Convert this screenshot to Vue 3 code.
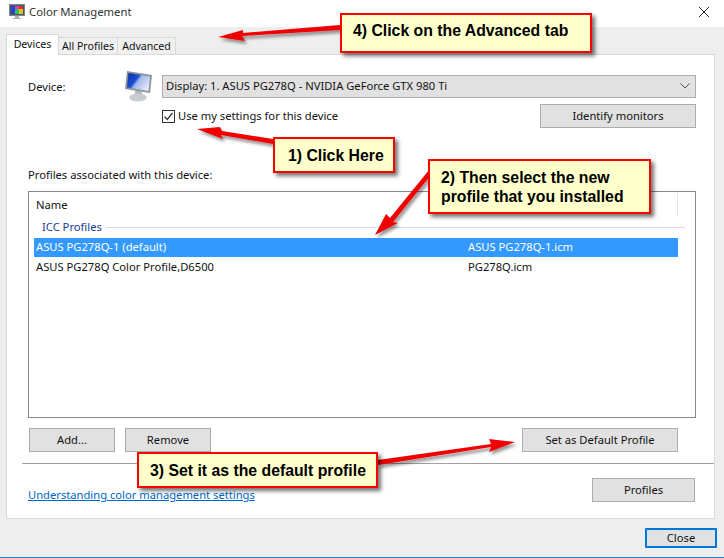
<script setup>
const profiles = [
  { name: 'ASUS PG278Q-1 (default)', file: 'ASUS PG278Q-1.icm', selected: true },
  { name: 'ASUS PG278Q Color Profile,D6500', file: 'PG278Q.icm', selected: false },
]
const arrows = [
  '340,25 243,33 243,30 218,37 245,41 242,36 340,30',
  '197,129 220,127 222,131 273,139 273,144 221,135 223,139',
  '375,235 386,214 390,218 429,170 431,175 393,222 398,223',
  '515,442 489,439 491,444 378,460 378,465 491,447 489,452',
]
</script>

<template>
  <div class="window">
    <header class="titlebar">
      <svg class="app-icon" viewBox="0 0 16 16" width="16" height="16">
        <rect x="0.5" y="0.5" width="15" height="11" fill="#4a5560" stroke="#7d8890" />
        <rect x="2" y="2" width="4" height="8" fill="#2b3fd0" />
        <rect x="6" y="2" width="4" height="8" fill="#30c050" />
        <rect x="10" y="2" width="4" height="8" fill="#e8c020" />
        <rect x="6" y="2" width="4" height="3" fill="#d040c0" />
        <rect x="10" y="2" width="4" height="3" fill="#e03030" />
        <path d="M6 12h4v2h2v1H4v-1h2z" fill="#a8aeb2" />
      </svg>
      <span class="title">Color Management</span>
      <svg class="close-x" viewBox="0 0 10 10" width="10" height="10">
        <path d="M0 0L10 10M10 0L0 10" stroke="#222" stroke-width="1" fill="none" />
      </svg>
    </header>

    <main class="body">
      <nav class="tabs">
        <div class="tab active">Devices</div>
        <div class="tab tab-profiles">All Profiles</div>
        <div class="tab tab-advanced">Advanced</div>
      </nav>

      <section class="panel">
        <div class="device-row">
          <span class="device-label">Device:</span>
          <svg class="monitor" viewBox="0 0 28 32" width="28" height="32">
            <defs>
              <linearGradient id="screen" x1="0" y1="0" x2="1" y2="0.6">
                <stop offset="0" stop-color="#0a2fa8" />
                <stop offset="0.45" stop-color="#1b4fd0" />
                <stop offset="0.55" stop-color="#9fb4ec" />
                <stop offset="1" stop-color="#dfe6f8" />
              </linearGradient>
            </defs>
            <path d="M2 0L27 4L25 22L0 18Z" fill="#8b939b" />
            <path d="M3.500 2L25 5.500L23.500 20L2 16.500Z" fill="url(#screen)" />
            <rect x="10" y="20" width="7" height="5" fill="#b4b8bc" />
            <ellipse cx="13" cy="26.500" rx="9" ry="4" fill="#c9cccf" />
          </svg>
          <div class="select">
            <span>Display: 1. ASUS PG278Q - NVIDIA GeForce GTX 980 Ti</span>
            <svg viewBox="0 0 10 6" width="10" height="6">
              <path d="M0.500 0.500L5 5L9.500 0.500" stroke="#555" fill="none" />
            </svg>
          </div>
        </div>

        <div class="settings-row">
          <label class="check">
            <svg class="checkbox" viewBox="0 0 13 13" width="13" height="13">
              <rect x="0.500" y="0.500" width="12" height="12" fill="#fff" stroke="#333" />
              <path d="M2.500 6.500L5.200 9.500L10.500 3" stroke="#333" stroke-width="1.200" fill="none" />
            </svg>
            <span>Use my settings for this device</span>
          </label>
          <button class="btn btn-identify">Identify monitors</button>
        </div>

        <p class="assoc">Profiles associated with this device:</p>

        <div class="list">
          <div class="list-head">
            <span>Name</span>
            <i class="col-sep"></i>
          </div>
          <div class="group">
            <span>ICC Profiles</span>
            <i class="group-line"></i>
          </div>
          <div v-for="p in profiles" :key="p.name" class="row" :class="{ selected: p.selected }">
            <span class="cell-name">{{ p.name }}</span>
            <span>{{ p.file }}</span>
          </div>
        </div>

        <div class="actions">
          <button class="btn btn-small">Add...</button>
          <button class="btn btn-small">Remove</button>
          <button class="btn btn-default">Set as Default Profile</button>
        </div>

        <hr class="sep" />

        <div class="panel-foot">
          <a class="link">Understanding color management settings</a>
          <button class="btn btn-profiles">Profiles</button>
        </div>
      </section>

      <footer class="bottom">
        <button class="btn btn-close">Close</button>
      </footer>
    </main>

    <svg class="arrows" viewBox="0 0 724 558" width="724" height="558">
      <defs>
        <filter id="shadow" x="-10%" y="-30%" width="130%" height="170%">
          <feDropShadow dx="2" dy="3" stdDeviation="1.500" flood-color="#000" flood-opacity="0.4" />
        </filter>
      </defs>
      <polygon v-for="a in arrows" :key="a" :points="a" fill="#f00000" filter="url(#shadow)" />
    </svg>

    <div class="callout c4">4) Click on the Advanced tab</div>
    <div class="callout c1">1) Click Here</div>
    <div class="callout c2">2) Then select the new<br />profile that you installed</div>
    <div class="callout c3">3) Set it as the default profile</div>
  </div>
</template>

<style>
html, body { margin: 0; overflow: hidden; }
</style>

<style scoped>
.window {
  position: relative;
  width: 724px;
  height: 558px;
  display: flex;
  flex-direction: column;
  overflow: hidden;
  background: #fff;
  color: #111;
  font: 11.200px/16px "Noto Sans", "Open Sans", sans-serif;
}
.titlebar {
  height: 27px;
  flex: none;
  display: flex;
  align-items: center;
  padding: 0 15px 3px 9px;
  box-sizing: border-box;
}
.title { margin-left: 4px; font-size: 11.300px; color: #333; }
.close-x { margin-left: auto; }
.body {
  flex: 1;
  display: flex;
  flex-direction: column;
  background: #eeeeee;
  border-bottom: 1px solid #2b7fc9;
}
.tabs {
  height: 27px;
  flex: none;
  display: flex;
  align-items: flex-end;
  padding-left: 6px;
  position: relative;
  z-index: 1;
}
.tab {
  height: 17px;
  box-sizing: border-box;
  border: 1px solid #d9d9d9;
  border-bottom: 0;
  border-left: 0;
  background: #f0f0f0;
  text-align: center;
  line-height: 17px;
  font-size: 10.600px;
}
.tab.active {
  width: 53px;
  height: 21px;
  margin-bottom: -1px;
  background: #fff;
  border-left: 1px solid #d9d9d9;
  line-height: 19px;
}
.tab-profiles { width: 59px; }
.tab-advanced { width: 58px; }
.panel {
  height: 465px;
  flex: none;
  width: 709px;
  margin-left: 6px;
  box-sizing: border-box;
  background: #fff;
  border: 1px solid #d9d9d9;
  padding: 20px 18px 0 21px;
}
.device-row {
  display: flex;
  align-items: center;
  height: 23px;
}
.device-label { width: 97px; flex: none; }
.monitor { flex: none; margin-right: 9px; }
.select {
  flex: 1;
  height: 23px;
  box-sizing: border-box;
  background: #e1e1e1;
  border: 1px solid #adadad;
  padding: 0 4px 1px 3px;
  display: flex;
  align-items: center;
  justify-content: space-between;
}
.select svg { margin-right: 1px; }
.settings-row {
  display: flex;
  justify-content: space-between;
  margin-top: 6px;
  padding-left: 134px;
  height: 24px;
}
.check { display: flex; align-items: flex-start; padding-top: 6px; gap: 3px; }
.check span { margin-top: -2px; }
.btn {
  height: 24px;
  box-sizing: border-box;
  background: #e1e1e1;
  border: 1px solid #adadad;
  padding: 0 0 1px;
  color: #111;
  font: inherit;
  text-align: center;
}
.btn-identify { width: 156px; }
.assoc { margin: 39px 0 0; height: 17px; line-height: 16px; }
.list {
  margin-top: 7px;
  height: 227px;
  box-sizing: border-box;
  border: 1px solid #828790;
  padding: 1px 17px 0 5px;
}
.list-head {
  height: 24px;
  display: flex;
  align-items: center;
  justify-content: space-between;
  padding: 0 0 1px 2px;
  box-sizing: border-box;
}
.col-sep { width: 1px; height: 24px; background: #e5e5e5; }
.group {
  height: 21px;
  display: flex;
  align-items: center;
  padding: 0 0 1px 8px;
  box-sizing: border-box;
  color: #1a3a9c;
  gap: 4px;
  margin-right: -7px;
}
.group-line { flex: 1; height: 1px; background: #d5dcf0; }
.row {
  height: 19px;
  display: flex;
  align-items: center;
  padding: 0 0 1px 2px;
  box-sizing: border-box;
  margin-bottom: 1px;
}
.row.selected { background: #3399ff; color: #fff; }
.cell-name { width: 432px; flex: none; }
.actions {
  display: flex;
  margin-top: 10px;
  padding-left: 1px;
  gap: 10px;
}
.btn-small { width: 86px; }
.btn-default { width: 156px; margin-left: 301px; }
.sep {
  margin: 11px -18px 0 -6px;
  border: 0;
  height: 1px;
  background: #a0a0a0;
}
.panel-foot {
  display: flex;
  justify-content: space-between;
  align-items: center;
  margin-top: 13px;
}
.link {
  color: #0066cc;
  text-decoration: underline;
  margin-top: 10px;
}
.btn-profiles { width: 103px; margin-right: 1px; }
.bottom {
  flex: 1;
  display: flex;
  justify-content: flex-end;
  padding: 9px 7px 0 0;
}
.btn-close {
  width: 72px;
  height: 20px;
  border: 2px solid #0078d7;
  padding: 0;
  line-height: 16px;
}
.arrows {
  position: absolute;
  left: 0;
  top: 0;
  pointer-events: none;
}
.callout {
  position: absolute;
  box-sizing: border-box;
  background: #ffffcc;
  border: 2px solid #ff0000;
  box-shadow: 3px 3px 4px rgba(0, 0, 0, 0.55);
  color: #000;
  font: bold 15.800px/19px "Liberation Sans", Arial, sans-serif;
  display: flex;
  align-items: center;
}
.c4 { left: 340px; top: 13px; width: 252px; height: 40px; padding: 0 0 5px 11px; }
.c1 { left: 273px; top: 137px; width: 122px; height: 36px; padding-left: 13px; }
.c2 { left: 428px; top: 159px; width: 223px; height: 55px; padding-left: 11px; }
.c3 { left: 137px; top: 452px; width: 241px; height: 36px; padding-left: 11px; }
</style>
